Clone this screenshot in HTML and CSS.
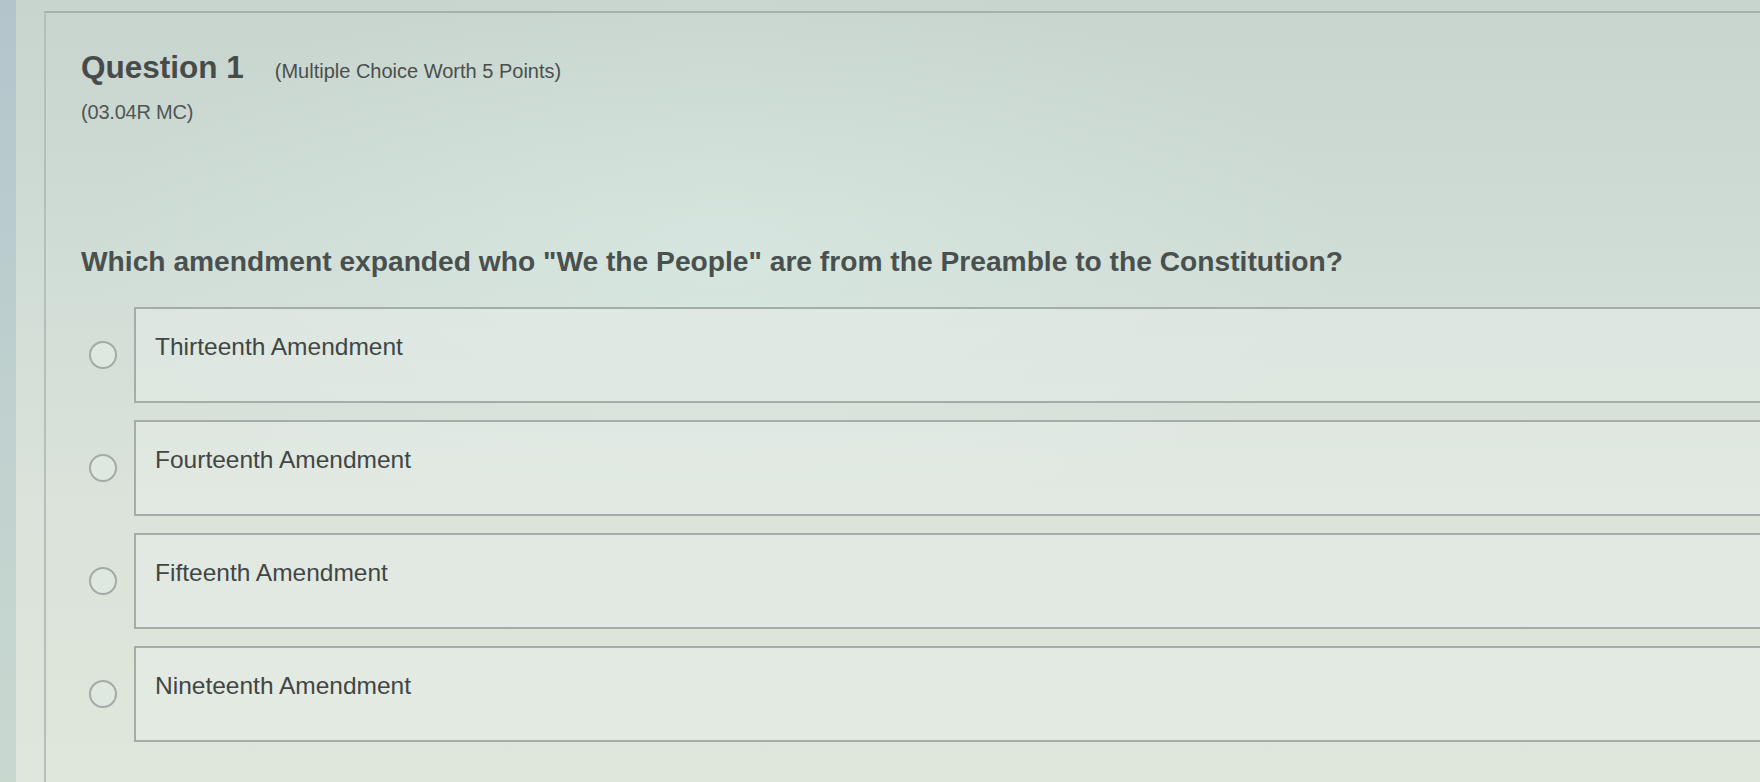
FILE: index.html
```html
<!DOCTYPE html>
<html lang="en">
<head>
<meta charset="utf-8">
<title>Question 1</title>
<link rel="stylesheet" href="styles.css">
</head>
<body>
<div class="screen">
  <div class="edge"></div>
  <main class="card">
    <header class="q-head">
      <h1 class="q-title">Question 1</h1>
      <span class="q-worth">(Multiple Choice Worth 5 Points)</span>
    </header>
    <div class="q-code">(03.04R MC)</div>
    <p class="q-text">Which amendment expanded who "We the People" are from the Preamble to the Constitution?</p>
    <ul class="options">
      <li class="option"><span class="radio"></span><div class="opt-box">Thirteenth Amendment</div></li>
      <li class="option"><span class="radio"></span><div class="opt-box">Fourteenth Amendment</div></li>
      <li class="option"><span class="radio"></span><div class="opt-box">Fifteenth Amendment</div></li>
      <li class="option"><span class="radio"></span><div class="opt-box">Nineteenth Amendment</div></li>
    </ul>
  </main>
</div>
</body>
</html>
```
FILE: styles.css
```css
html, body {
  margin: 0;
  padding: 0;
  height: 100%;
  overflow: hidden;
}
body {
  font-family: "Liberation Sans", Arial, sans-serif;
  background:
    radial-gradient(ellipse 900px 420px at 720px 260px, rgba(220, 236, 230, 0.55), rgba(220, 236, 230, 0) 70%),
    linear-gradient(180deg, #c8d4ce 0%, #cfdcd6 30%, #dbe3da 65%, #dfe6db 100%);
}
.screen {
  display: flex;
  height: 782px;
  width: 1760px;
}
.edge {
  width: 16px;
  flex: none;
  background: linear-gradient(180deg, #b3c5cb 0%, #bfd0cf 50%, #c9d8cf 100%);
}
.card {
  flex: 1;
  margin: 11px 0 0 28px;
  border-top: 2px solid #a7b0ac;
  border-left: 2px solid #b5bfba;
  padding: 36px 0 0 35px;
  overflow: hidden;
}
.q-head {
  display: flex;
  align-items: baseline;
  gap: 31px;
}
.q-title {
  margin: 0;
  font-size: 31.5px;
  line-height: 36px;
  font-weight: bold;
  color: #474c4a;
}
.q-worth {
  font-size: 20px;
  letter-spacing: 0;
  color: #4a4f4d;
}
.q-code {
  margin-top: 15px;
  font-size: 20px;
  line-height: 24px;
  letter-spacing: -0.2px;
  color: #505553;
}
.q-text {
  margin: 120px 0 0;
  font-size: 28.2px;
  line-height: 34px;
  font-weight: bold;
  color: #49504e;
}
.options {
  list-style: none;
  margin: 29px 0 0;
  padding: 0;
  display: flex;
  flex-direction: column;
  gap: 17px;
}
.option {
  display: flex;
  align-items: center;
  gap: 17px;
  padding-left: 8px;
}
.radio {
  flex: none;
  width: 24px;
  height: 24px;
  border: 2px solid #a3aba7;
  border-radius: 50%;
  background: #dfe7e1;
}
.opt-box {
  width: 1700px;
  flex: none;
  height: 68px;
  padding: 24px 0 0 19px;
  border: 2px solid #a5ada9;
  background: rgba(232, 240, 234, 0.45);
  font-size: 24.5px;
  line-height: 28px;
  letter-spacing: 0;
  color: #414644;
  box-sizing: content-box;
}
```
